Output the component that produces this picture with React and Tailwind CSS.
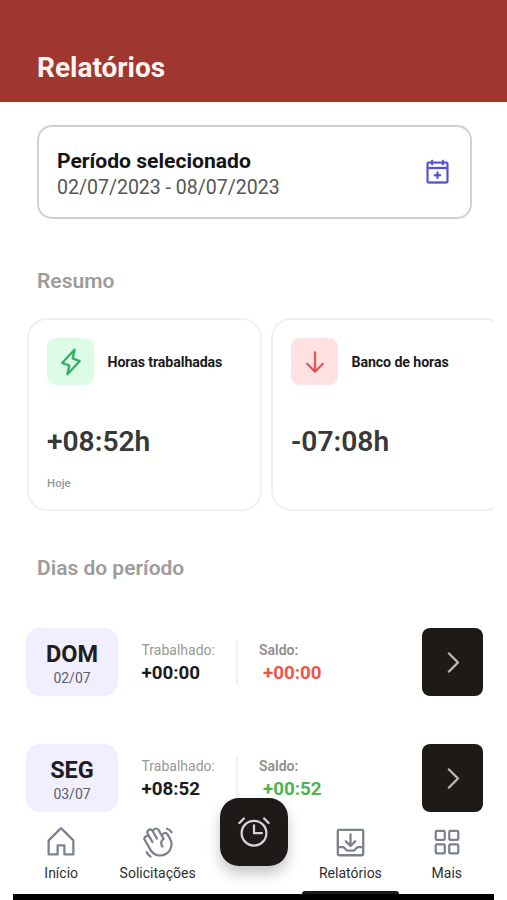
import {
  PiAlarm,
  PiArrowDown,
  PiCalendarPlus,
  PiCaretRight,
  PiHandWaving,
  PiHouse,
  PiLightning,
  PiSquaresFour,
  PiTrayArrowDown,
} from 'react-icons/pi';

const days = [
  { name: 'DOM', date: '02/07', worked: '+00:00', balance: '+00:00', negative: true },
  { name: 'SEG', date: '03/07', worked: '+08:52', balance: '+00:52', negative: false },
];

function SummaryCard({ icon, iconClass, title, value, note }) {
  return (
    <div className="h-[193px] w-[235px] shrink-0 rounded-[20px] border-2 border-[#f0f0f0] px-[18px] pt-[18px]">
      <div className="flex items-center gap-[13.5px]">
        <div className={`flex size-[47px] items-center justify-center rounded-[9px] ${iconClass}`}>
          {icon}
        </div>
        <span className="mt-[2px] text-[14.2px] font-bold tracking-[-0.1px] text-[#1c1c1c]">{title}</span>
      </div>
      <div className="mt-[39px] text-[28.2px] leading-[36px] font-semibold text-[#383838]">{value}</div>
      {note && <div className="mt-[15px] text-[11.5px] leading-[16px] font-medium text-[#9a9a9a]">{note}</div>}
    </div>
  );
}

function DayRow({ day }) {
  return (
    <div className="flex h-[68px] items-center pr-[11px] pl-[13px]">
      <div className="flex h-full w-[92px] flex-col items-center rounded-[14px] bg-[#f0eeff] pt-[12px]">
        <span className="text-[23.5px] leading-[28px] font-bold text-[#1d1d22]">{day.name}</span>
        <span className="mt-[1px] text-[14px] leading-[18px] text-[#5f5e6b]">{day.date}</span>
      </div>
      <div className="ml-[23.5px] w-[94.5px]">
        <div className="text-[14px] leading-[18px] text-[#999]">Trabalhado:</div>
        <div className="mt-[3px] text-[18.8px] leading-[22px] font-bold text-[#1b1b1b]">{day.worked}</div>
      </div>
      <div className="h-[45px] w-[2px] bg-[#f0f0f0]" />
      <div className="ml-[21px]">
        <div className="text-[14px] leading-[18px] font-semibold text-[#8f8f8f]">Saldo:</div>
        <div
          className={
            day.negative
              ? 'mt-[3px] ml-[4px] text-[18.8px] leading-[22px] font-bold text-[#f0564a]'
              : 'mt-[3px] ml-[4px] text-[18.8px] leading-[22px] font-bold text-[#4eb350]'
          }
        >
          {day.balance}
        </div>
      </div>
      <button className="ml-auto flex h-full w-[61px] items-center justify-center rounded-[8px] bg-[#1e1a17]">
        <PiCaretRight className="size-[29px] stroke-[4] text-[#c0bebc]" />
      </button>
    </div>
  );
}

function NavItem({ icon, label, active }) {
  return (
    <div className="relative flex flex-1 flex-col items-center pt-[10px]">
      <div className="flex h-[40px] items-center justify-center text-[#7d818c]">{icon}</div>
      <span className="mt-[2px] text-[14px] leading-[18px] whitespace-nowrap text-[#2f2f2f]">{label}</span>
      {active && <div className="absolute bottom-0 h-[3px] w-full rounded-t-sm bg-[#1b1918]" />}
    </div>
  );
}

export default function App() {
  return (
    <div className="h-[900px] w-[507px] overflow-hidden bg-white font-['Roboto',sans-serif]">
      <header className="h-[102px] bg-[#a0372f] pt-[51px] pl-[37px]">
        <h1 className="text-[28px] leading-[34px] font-bold text-[#fff3f0]">Relatórios</h1>
      </header>

      <main className="mx-[13px] h-[710px] overflow-hidden">
        <div className="mt-[23px] mr-[22px] ml-[24px] flex h-[94px] items-center justify-between rounded-[15px] border-2 border-[#d0d0d0] pr-[18px] pl-[18px]">
          <div className="pt-[4px]">
            <div className="text-[21.1px] leading-[27px] font-bold text-[#151515]">Período selecionado</div>
            <div className="text-[19.5px] leading-[27px] text-[#555]">02/07/2023 - 08/07/2023</div>
          </div>
          <PiCalendarPlus className="size-[29px] stroke-[3] text-[#5652cf]" />
        </div>

        <h2 className="mt-[48px] ml-[24px] text-[21px] leading-[28px] font-semibold text-[#9c9c9c]">Resumo</h2>
        <div className="mt-[23px] ml-[14px] flex gap-[9px]">
          <SummaryCard
            icon={<PiLightning className="size-[28px] stroke-[6] text-[#2fae62]" />}
            iconClass="bg-[#dcfce6]"
            title="Horas trabalhadas"
            value="+08:52h"
            note="Hoje"
          />
          <SummaryCard
            icon={<PiArrowDown className="size-[28px] stroke-[4] text-[#e04a50]" />}
            iconClass="bg-[#ffe1e2]"
            title="Banco de horas"
            value="-07:08h"
          />
        </div>

        <h2 className="mt-[43px] ml-[24px] text-[21px] leading-[28px] font-semibold text-[#9c9c9c]">
          Dias do período
        </h2>
        <div className="mt-[46px] flex flex-col gap-[48px]">
          {days.map((day) => (
            <DayRow key={day.name} day={day} />
          ))}
        </div>
      </main>

      <nav className="mr-[12px] ml-[13px] flex h-[82px] bg-white">
        <NavItem icon={<PiHouse className="size-[36px]" />} label="Início" />
        <NavItem icon={<PiHandWaving className="size-[36px]" />} label="Solicitações" />
        <div className="relative flex-1">
          <button className="absolute -top-[14px] left-1/2 flex size-[68px] -translate-x-1/2 items-center justify-center rounded-[19px] bg-[#1e1a17] shadow-[0_8px_14px_rgba(0,0,0,0.22)]">
            <PiAlarm className="size-[36px] text-[#d9d5d6]" />
          </button>
        </div>
        <NavItem icon={<PiTrayArrowDown className="size-[37px]" />} label="Relatórios" active />
        <NavItem icon={<PiSquaresFour className="size-[36px]" />} label="Mais" />
      </nav>
      <div className="mx-[13px] h-[6px] bg-black" />
    </div>
  );
}
